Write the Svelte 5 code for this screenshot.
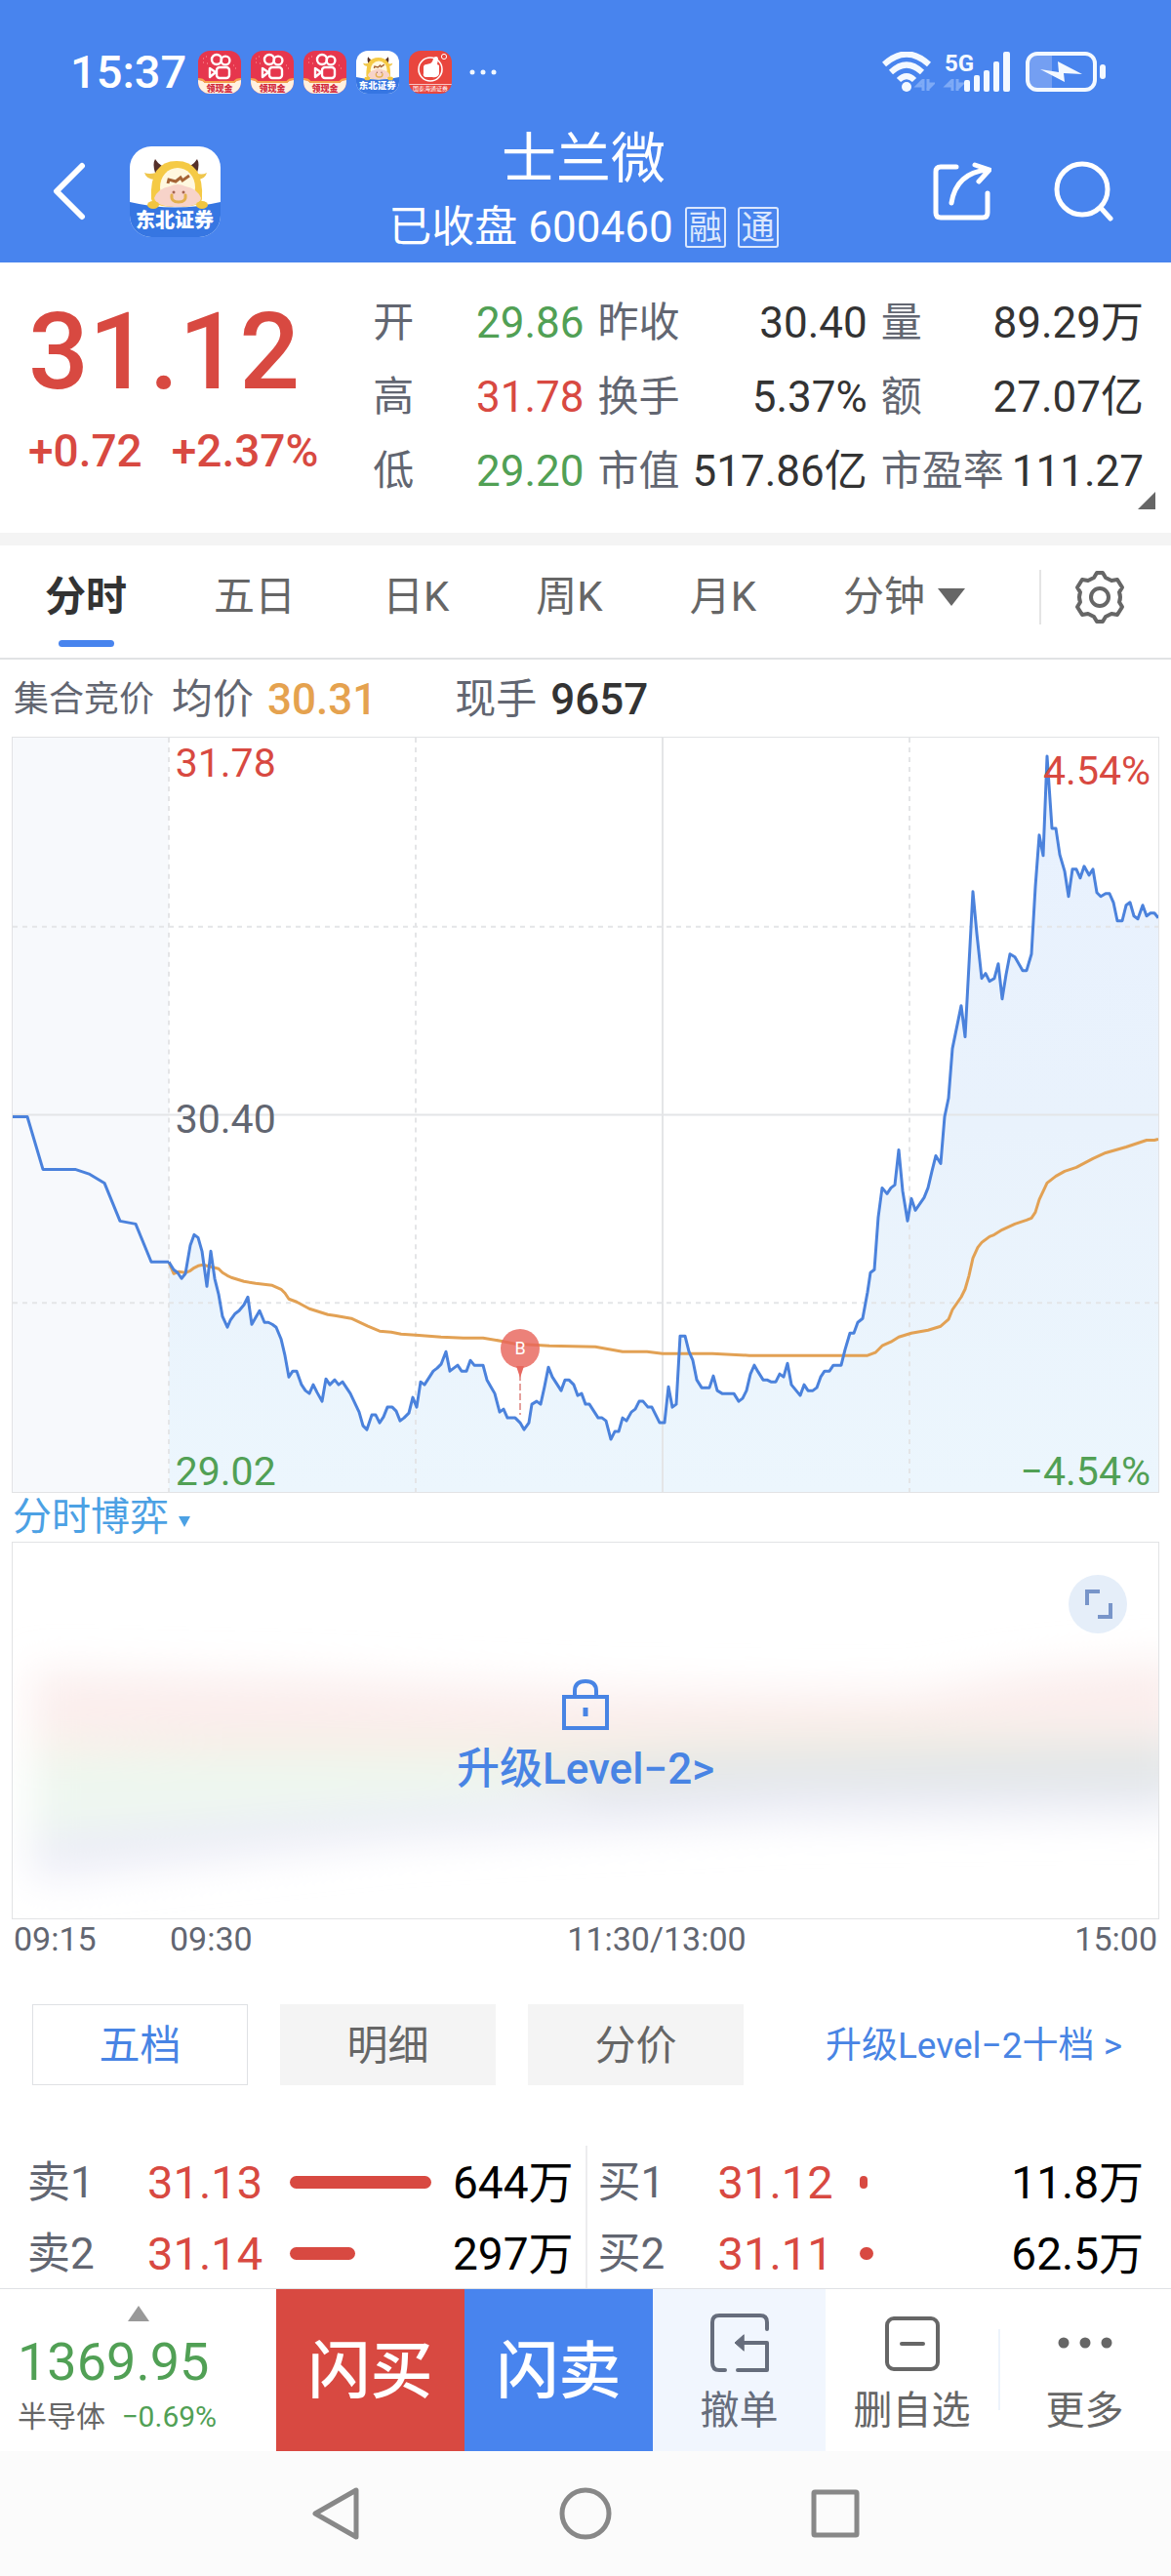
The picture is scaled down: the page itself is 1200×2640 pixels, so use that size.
<script lang="ts">
	type Level = { label: string; price: string; volume: number };

	const quoteColumns = [
		[
			{ label: '开', value: '29.86', tone: 'down' },
			{ label: '高', value: '31.78', tone: 'up' },
			{ label: '低', value: '29.20', tone: 'down' }
		],
		[
			{ label: '昨收', value: '30.40', tone: '' },
			{ label: '换手', value: '5.37%', tone: '' },
			{ label: '市值', value: '517.86亿', tone: '' }
		],
		[
			{ label: '量', value: '89.29万', tone: '' },
			{ label: '额', value: '27.07亿', tone: '' },
			{ label: '市盈率', value: '111.27', tone: '' }
		]
	];

	const periods = ['分时', '五日', '日K', '周K', '月K'];
	let period = $state('分时');

	const depthTabs = ['五档', '明细', '分价'];
	let depthTab = $state('五档');

	const sells: Level[] = [
		{ label: '卖1', price: '31.13', volume: 644 },
		{ label: '卖2', price: '31.14', volume: 297 }
	];
	const buys: Level[] = [
		{ label: '买1', price: '31.12', volume: 11.8 },
		{ label: '买2', price: '31.11', volume: 62.5 }
	];
	const maxVolume = Math.max(...[...sells, ...buys].map((l) => l.volume));

	// call auction, 09:15 - 09:30
	const auction = '0,389 15,389 31,443 64,443 79,448 94,457 110,496 126,499 142,538 160,538';
	const price =
		'160,538 165,546 169,549 173,555 177,550 182,521 186,510 190,513 194,527 199,563 203,527 207,555 211,571 215,594 220,605 223,598 228,591 232,588 237,582 241,574 245,602 249,595 253,588 258,600 262,600 266,602 270,605 275,617 279,634 283,656 287,650 291,650 296,664 300,670 304,673 308,664 312,672 317,681 321,658 325,664 330,659 334,664 338,661 346,673 355,692 359,706 363,710 368,695 372,695 376,703 380,697 384,687 389,687 393,691 397,701 401,698 406,693 410,677 414,687 418,661 422,664 431,650 435,647 439,643 444,630 448,650 456,644 460,650 465,650 469,639 473,644 482,644 486,659 490,666 494,673 499,692 503,689 507,698 515,698 520,703 524,710 529,703 532,684 537,681 541,684 545,666 549,646 553,656 562,670 566,659 570,659 575,664 579,675 583,673 587,684 591,684 600,698 604,698 608,701 613,720 617,712 621,712 625,698 629,701 634,692 638,689 642,681 646,681 651,687 655,687 663,703 668,703 672,666 676,687 680,684 684,614 689,614 693,630 697,639 701,659 706,667 714,667 718,655 722,670 727,673 739,673 744,681 748,678 752,670 756,653 760,644 764,651 769,659 773,659 777,661 782,661 786,653 790,656 794,642 798,664 807,675 811,664 815,670 820,670 824,667 828,656 832,650 837,650 841,644 849,644 853,628 858,611 862,611 866,600 871,596 876,569 879,549 883,546 887,492 891,462 896,468 900,462 904,459 908,423 912,465 917,496 921,473 925,485 934,472 938,462 942,445 946,429 951,437 955,389 959,370 963,319 972,275 976,307 984,158 988,201 993,247 997,242 1001,250 1006,247 1010,232 1014,268 1018,243 1022,222 1027,225 1035,239 1039,239 1044,222 1048,153 1052,100 1056,121 1060,19 1065,93 1069,93 1073,120 1078,137 1082,163 1086,135 1090,135 1094,144 1098,132 1103,141 1107,135 1111,159 1115,163 1120,160 1124,160 1128,169 1132,188 1137,188 1141,172 1145,169 1149,183 1153,186 1158,172 1162,183 1166,180 1170,180 1174,185';
	const average =
		'160,538 165,550 170,548 177,549 182,547 186,544 190,542 195,541 203,543 211,545 215,549 220,552 224,554 237,558 249,560 266,562 275,566 279,570 283,576 291,579 304,586 323,592 330,593 347,596 364,604 376,609 388,610 398,612 413,613 439,615 462,616 482,616 500,619 515,622 550,624 597,625 625,630 650,630 666,632 717,632 755,634 876,634 884,631 891,624 900,620 908,615 921,611 938,608 951,604 959,597 963,587 972,574 976,566 980,552 984,534 989,523 993,518 1001,512 1006,510 1014,505 1027,499 1039,495 1044,493 1048,487 1052,474 1060,457 1069,450 1078,445 1090,441 1107,432 1120,426 1141,420 1162,413 1170,413 1174,412';
</script>

{#snippet bull()}
	<path d="M0 57Q46 68 93 57V93H0z" fill="#3676e2" />
	<path d="M26 27Q23 18 26 13Q29 18 33 20L35 24zM69 27Q72 18 69 13Q66 18 62 20L60 24z" fill="#55302a" />
	<path d="M27 27Q20 29 15 27Q17 34 26 34zM68 27Q73 30 79 27Q77 34 69 34z" fill="#efc64c" />
	<path d="M22 54Q20 15 48 15Q76 15 74 54Q73 62 48 62Q24 62 22 54z" fill="#f5ca45" />
	<ellipse cx="49" cy="42" rx="18" ry="20" fill="#fff8df" />
	<path d="M39 38L40 34L47 36L52 32L54 35L61 30" fill="none" stroke="#a56436" stroke-width="3" />
	<path d="M25 53Q29 43 41 41Q49 37 57 41Q69 43 73 53Q72 62 49 62Q27 62 25 53z" fill="#f7d3c9" />
	<path d="M43 50Q42 57 50 57Q58 57 57 50" fill="none" stroke="#e3b04c" stroke-width="3" stroke-linecap="round" />
	<circle cx="45" cy="47" r="1.5" fill="#a66450" />
	<circle cx="55" cy="47" r="1.5" fill="#a66450" />
	<ellipse cx="24" cy="60" rx="6" ry="4" fill="#f1c540" />
	<ellipse cx="74" cy="60" rx="6" ry="4" fill="#f1c540" />
	<text x="46" y="83" text-anchor="middle" font-size="20" font-weight="900" fill="#fff">东北证券</text>
{/snippet}

{#snippet levels(rows: Level[], name: string)}
	<table aria-label={name}>
		<tbody>
			{#each rows as row}
				<tr>
					<th scope="row">{row.label}</th>
					<td class="price">{row.price}</td>
					<td><div class="bar" style="width: {(row.volume / maxVolume) * 100}%"></div></td>
					<td class="volume">{row.volume}万</td>
				</tr>
			{/each}
		</tbody>
	</table>
{/snippet}

<div class="app">
	<header>
		<div class="status">
			<span class="clock">15:37</span>
			<div class="notices">
				{#each [1, 2, 3] as n (n)}
					<svg class="notice" viewBox="0 0 44 44" aria-hidden="true">
						<rect width="44" height="44" fill="#e6364d" />
						<path d="M0 30Q5 30 7 33H37Q39 30 44 30V44H0z" fill="#fff1df" />
						<path d="M0 29Q5 29 7 32H37Q39 29 44 29" fill="none" stroke="#f6a04c" stroke-width="2" />
						<g fill="none" stroke="#fff" stroke-width="2.4">
							<circle cx="19" cy="9" r="5" />
							<circle cx="28" cy="10" r="4.4" />
							<rect x="19" y="17" width="13" height="11" rx="3" />
							<path d="M18 22L12 18V27z" stroke-linejoin="round" />
						</g>
						<path d="M5 8h1M8 6h1M5 12h1M9 13h1M36 15h1M38 18h1" stroke="#ffa0a0" />
						<text x="22" y="42" text-anchor="middle" font-size="9" font-weight="900" fill="#d22b3e">领现金</text>
					</svg>
				{/each}
				<svg class="notice" viewBox="0 0 93 93" aria-hidden="true">
					<rect width="93" height="93" fill="#fff" />
					{@render bull()}
				</svg>
				<svg class="notice" viewBox="0 0 44 44" aria-hidden="true">
					<rect width="44" height="44" fill="#e9463e" />
					<circle cx="22" cy="19" r="12" fill="none" stroke="#fff" stroke-width="1.6" />
					<path d="M15 17Q15 14 18 14L22 13Q25 11 25 7Q30 4 30 9L29 14L31 15V24Q29 28 24 27H17Q14 26 15 23z" fill="#fff" />
					<circle cx="36" cy="6" r="2.6" fill="none" stroke="#fff" />
					<path d="M0 34.5H44" stroke="#fff" stroke-width=".7" />
					<text x="22" y="41" text-anchor="middle" font-size="6" fill="#fff">国泰海通证券</text>
				</svg>
			</div>
			<svg class="dots" width="28" height="6" viewBox="0 0 28 6" fill="#f2f8ff" aria-hidden="true">
				<circle cx="3" cy="3" r="2.5" /><circle cx="14" cy="3" r="2.5" /><circle cx="25" cy="3" r="2.5" />
			</svg>
			<div class="signals">
				<svg width="54" height="42" viewBox="0 0 54 42" aria-hidden="true">
					<g fill="none" stroke="#f4f9ff" stroke-width="6">
						<path d="M2 13Q25 -8 48 13" /><path d="M9 21Q25 6 41 21" /><path d="M17 29Q25 21 33 29" />
					</g>
					<circle cx="25" cy="36" r="5" fill="#f4f9ff" />
					<path d="M42 28V40M42 29L36 35H42M47 28V40M46 39L52 33H46" stroke="#7eaaf6" stroke-width="3" fill="none" />
				</svg>
				<svg class="cell" width="67" height="42" viewBox="0 0 67 42" aria-hidden="true">
					<text x="0" y="20" font-size="24" font-weight="700" fill="#f4f9ff">5G</text>
					<path d="M8 28V40M8 29L2 35H8M13 28V40M12 39L18 33H12" stroke="#7eaaf6" stroke-width="3" fill="none" />
					<g fill="#f4f9ff">
						<rect x="20" y="29" width="6" height="12" rx="2" />
						<rect x="30" y="24" width="6" height="17" rx="2" />
						<rect x="40" y="19" width="6" height="22" rx="2" />
						<rect x="50" y="10" width="6" height="31" rx="2" />
						<rect x="60" y="0" width="7" height="41" rx="2" />
					</g>
				</svg>
				<svg class="battery" width="82" height="42" viewBox="0 0 82 42" aria-hidden="true">
					<rect x="2" y="2" width="25" height="37" rx="8" fill="#749ff2" />
					<rect x="18" y="2" width="9" height="37" fill="#749ff2" />
					<rect x="2" y="2" width="69" height="37" rx="10" fill="none" stroke="#f4f9ff" stroke-width="4" />
					<rect x="76" y="13" width="6" height="15" rx="3" fill="#f4f9ff" />
					<path d="M15 18L34 21L33 10L58 23L39 22L40 31z" fill="#f4f9ff" />
				</svg>
			</div>
		</div>
		<div class="nav">
			<div class="left">
				<button aria-label="返回">
					<svg width="34" height="60" viewBox="0 0 34 60"><path d="M30 4L4 30L30 56" fill="none" stroke="#fff" stroke-width="6" stroke-linecap="round" stroke-linejoin="round" /></svg>
				</button>
				<svg class="logo" viewBox="0 0 93 93" role="img" aria-label="东北证券">
					<rect width="93" height="93" fill="#fff" />
					{@render bull()}
				</svg>
			</div>
			<div class="title">
				<h1>士兰微</h1>
				<p>已收盘 600460 <span class="badge">融</span><span class="badge">通</span></p>
			</div>
			<div class="right">
				<button aria-label="分享">
					<svg width="60" height="60" viewBox="0 0 60 60" fill="none" stroke="#fff" stroke-width="5" stroke-linecap="round" stroke-linejoin="round">
						<path d="M24 5H8Q3 5 3 10V52Q3 57 8 57H51Q56 57 56 52V32" />
						<path d="M19 42Q24 11 56 8M43 3L58 8L47 20" />
					</svg>
				</button>
				<button aria-label="搜索">
					<svg width="62" height="62" viewBox="0 0 62 62" fill="none" stroke="#fff" stroke-width="5" stroke-linecap="round">
						<circle cx="29" cy="29" r="26" /><path d="M48 48L58 59" />
					</svg>
				</button>
			</div>
		</div>
	</header>

	<section class="quote">
		<div class="last up">
			<strong>31.12</strong>
			<div class="change"><span>+0.72</span><span>+2.37%</span></div>
		</div>
		<div class="stats">
			{#each quoteColumns as column}
				<dl>
					{#each column as item}
						<div><dt>{item.label}</dt><dd class={item.tone}>{item.value}</dd></div>
					{/each}
				</dl>
			{/each}
		</div>
		<i class="corner"></i>
	</section>

	<nav class="periods">
		<div class="period-list">
			{#each periods as p}
				<button class:active={period === p} onclick={() => (period = p)}>{p}</button>
			{/each}
			<button class="minutes">分钟<svg width="28" height="18" viewBox="0 0 28 18"><path d="M0 0H28L14 18z" fill="#666" /></svg></button>
		</div>
		<button class="settings" aria-label="设置">
			<svg width="56" height="56" viewBox="0 0 56 56" fill="none" stroke="#666" stroke-width="4" stroke-linejoin="round">
				<path d="M22 8L25 3H31L34 8L40 11L46 10L51 18L48 23Q50 28 48 33L51 38L46 46L40 45L34 48L31 53H25L22 48L16 45L10 46L5 38L8 33Q6 28 8 23L5 18L10 10L16 11z" />
				<circle cx="28" cy="28" r="9" />
			</svg>
		</button>
	</nav>

	<div class="summary">
		<span class="small">集合竞价</span>
		<span>均价</span><b class="avg">30.31</b>
		<span class="hand">现手</span><b>9657</b>
	</div>

	<div class="chart">
		<svg class="plot" viewBox="0 0 1174 774" preserveAspectRatio="none" role="img" aria-label="分时走势">
			<defs>
				<linearGradient id="area" x1="0" y1="0" x2="0" y2="1">
					<stop offset="0" stop-color="#e8f1fe" />
					<stop offset=".5" stop-color="#e9f2fc" />
					<stop offset="1" stop-color="#ecf6fd" />
				</linearGradient>
			</defs>
			<rect width="160" height="774" fill="#f7f9fc" />
			<polygon points="160,774 {price} 1174,774" fill="url(#area)" />
			<g fill="none" stroke="#e4e5e7" stroke-width="2">
				<path d="M0 387H1174M666 0V774" />
				<path d="M0 194H1174M0 580H1174M160 0V774M413 0V774M919 0V774" stroke-dasharray="5 5" />
			</g>
			<g fill="none" stroke-width="3" stroke-linejoin="round">
				<polyline points={average} stroke="#e2a154" />
				<polyline points={auction} stroke="#4b82dc" />
				<polyline points={price} stroke="#4b82dc" />
			</g>
		</svg>
		<svg class="pin" width="40" height="90" viewBox="0 0 40 90" aria-hidden="true">
			<path d="M20 46V88" stroke="#e5a09c" stroke-width="2" stroke-dasharray="7 3" />
			<path d="M16 38H24L20 50z" fill="#e76860" />
			<circle cx="20" cy="20" r="20" fill="#e8655c" fill-opacity=".82" />
			<text x="20" y="26" text-anchor="middle" font-size="18" fill="#fff">B</text>
		</svg>
		<span class="mark high up">31.78</span>
		<span class="mark middle">30.40</span>
		<span class="mark low down">29.02</span>
		<span class="mark high-rate up">4.54%</span>
		<span class="mark low-rate down">−4.54%</span>
	</div>

	<button class="indicator">分时博弈<svg width="12" height="11" viewBox="0 0 12 11"><path d="M0 0H12L6 11z" fill="#4ca1e4" /></svg></button>

	<div class="level2">
		<svg class="haze" viewBox="0 0 1174 386" preserveAspectRatio="none" aria-hidden="true">
			<defs>
				<filter id="soft" x="-10%" y="-50%" width="120%" height="200%"><feGaussianBlur stdDeviation="21" /></filter>
			</defs>
			<g filter="url(#soft)">
				<path d="M20 132L300 138L600 152L920 155L1050 132L1200 120V200L900 205L500 205L20 200z" fill="#fbeeed" />
				<path d="M20 205L300 200L600 200L900 190L1200 200V225L600 235L20 225z" fill="#f4efe2" />
				<path d="M20 220L300 220L500 225L700 240L400 275L20 300z" fill="#eef7f0" />
				<path d="M480 235L700 215L1200 205V270L700 280z" fill="#e2e6e7" />
				<path d="M20 300L400 272L800 250L1200 255V280L800 285L400 305L20 345z" fill="#ebecf6" />
			</g>
		</svg>
		<a class="upgrade" href="#level2">
			<svg width="48" height="54" viewBox="0 0 48 54" fill="none" stroke="#4884e4" stroke-width="4">
				<rect x="2" y="19" width="44" height="32" /><path d="M13 19V13Q13 3 24 3Q35 3 35 13V19" /><path d="M24 30V39" stroke-width="5" />
			</svg>
			<span>升级Level−2&gt;</span>
		</a>
		<button class="expand" aria-label="全屏">
			<svg width="60" height="60" viewBox="0 0 60 60" fill="none" stroke="#7895c9" stroke-width="4"><path d="M19 31V17H32M30 43H43V29" /></svg>
		</button>
	</div>

	<div class="times"><span>09:15</span><span>09:30</span><span>11:30/13:00</span><span>15:00</span></div>

	<div class="depth-tabs">
		{#each depthTabs as tab}
			<button class:active={depthTab === tab} onclick={() => (depthTab = tab)}>{tab}</button>
		{/each}
		<a href="#level2">升级Level−2十档 &gt;</a>
	</div>

	<div class="depth">
		{@render levels(sells, '卖盘')}
		{@render levels(buys, '买盘')}
	</div>

	<footer>
		<button class="sector">
			<svg width="22" height="16" viewBox="0 0 22 16"><path d="M11 0L22 16H0z" fill="#999" /></svg>
			<span class="index down">1369.95</span>
			<span class="sector-name">半导体 <span class="down">−0.69%</span></span>
		</button>
		<button class="trade buy">闪买</button>
		<button class="trade sell">闪卖</button>
		<button class="action cancel">
			<svg width="60" height="60" viewBox="0 0 60 60" fill="none" stroke="#666d7c" stroke-width="4" stroke-linecap="round" stroke-linejoin="round">
				<path d="M58 16V9Q58 2 51 2H9Q2 2 2 9V50Q2 58 9 58H15M28 58H58V30H29" />
				<path d="M34 22L25 30L34 38z" fill="#666d7c" stroke-width="1" />
			</svg>
			撤单
		</button>
		<button class="action remove">
			<svg width="60" height="60" viewBox="0 0 60 60" fill="none" stroke="#666" stroke-width="4" stroke-linecap="round">
				<rect x="4" y="5" width="52" height="52" rx="7" /><path d="M19 31H41" />
			</svg>
			删自选
		</button>
		<button class="action more">
			<svg width="60" height="60" viewBox="0 0 60 60" fill="#666">
				<circle cx="8" cy="30" r="5.5" /><circle cx="30" cy="30" r="5.5" /><circle cx="52" cy="30" r="5.5" />
			</svg>
			更多
		</button>
	</footer>

	<div class="system" role="toolbar" aria-label="系统导航">
		<button aria-label="后退"><svg width="56" height="56" viewBox="0 0 56 56"><path d="M49 4V52L7 28z" /></svg></button>
		<button aria-label="主屏幕"><svg width="56" height="56" viewBox="0 0 56 56"><circle cx="28" cy="28" r="24" /></svg></button>
		<button aria-label="最近任务"><svg width="56" height="56" viewBox="0 0 56 56"><rect x="6" y="6" width="44" height="44" rx="1" /></svg></button>
	</div>
</div>

<style>
	:global(body) {
		margin: 0;
		background: #fff;
	}
	.app {
		font-family: Roboto, "Noto Sans CJK SC", sans-serif;
		font-size: 42px;
		line-height: 48px;
		color: #333;
		overflow: hidden;
	}
	button {
		padding: 0;
		border: 0;
		background: none;
		font: inherit;
		color: inherit;
		cursor: pointer;
	}
	a {
		color: #4884e4;
		text-decoration: none;
	}
	svg {
		display: block;
		flex: none;
	}
	h1,
	p,
	dl,
	dd {
		margin: 0;
	}

	header {
		padding-top: 52px;
		background: #4884ee;
		color: #fff;
	}
	.status {
		display: flex;
		align-items: center;
		height: 44px;
		padding: 0 67px 0 72px;
	}
	.clock {
		font-size: 47px;
		font-weight: 500;
	}
	.notices {
		display: flex;
		gap: 10px;
		margin-left: 12px;
	}
	.notice {
		width: 44px;
		height: 44px;
		border-radius: 12px;
	}
	.dots {
		margin-left: 18px;
	}
	.signals {
		display: flex;
		gap: 10px;
		margin-left: auto;
	}
	.cell {
		overflow: visible;
	}
	.battery {
		margin-left: 6px;
	}
	.nav {
		display: grid;
		grid-template-columns: 1fr auto 1fr;
		align-items: center;
		padding: 32px 58px 5px 54px;
	}
	.left,
	.right {
		display: flex;
		align-items: center;
		gap: 45px;
	}
	.right {
		justify-content: flex-end;
		gap: 64px;
	}
	.logo {
		width: 93px;
		height: 93px;
		border-radius: 22px;
	}
	.title {
		padding: 3px 0 7px;
		text-align: center;
	}
	.title h1 {
		font-size: 56px;
		line-height: 64px;
		font-weight: 400;
	}
	.title p {
		display: flex;
		align-items: center;
		gap: 12px;
		margin-top: 14px;
		font-size: 44px;
	}
	.badge {
		width: 38px;
		border: 2px solid #dbe7fd;
		border-radius: 3px;
		font-size: 34px;
		line-height: 38px;
		color: #dbe7fd;
	}

	.quote {
		position: relative;
		display: flex;
		padding: 24px 28px 25px 29px;
		border-bottom: 13px solid #f4f4f4;
	}
	.last {
		flex: 353;
		padding-top: 13px;
	}
	.last strong {
		display: block;
		font-size: 109px;
		line-height: 110px;
		font-weight: 500;
	}
	.change {
		display: flex;
		gap: 30px;
		margin-top: 22px;
		font-size: 46px;
		font-weight: 500;
	}
	.stats {
		flex: 789;
		display: grid;
		grid-template-columns: 216fr 276fr 269fr;
		gap: 14px;
	}
	.stats dl div {
		display: flex;
		justify-content: space-between;
		align-items: center;
		height: 76px;
	}
	.stats dt {
		color: #626671;
	}
	.stats dd {
		font-size: 44px;
		white-space: nowrap;
	}
	.corner {
		position: absolute;
		right: 16px;
		bottom: 24px;
		border: 9px solid #666;
		border-top-color: transparent;
		border-left-color: transparent;
	}

	.periods {
		display: flex;
		align-items: flex-start;
		height: 115px;
		border-bottom: 2px solid #e1e2e4;
		color: #666;
	}
	.period-list {
		flex: 1;
		display: flex;
		justify-content: space-between;
		padding: 29px 76px 0 46px;
	}
	.period-list button {
		display: flex;
		flex-direction: column;
		align-items: center;
	}
	.period-list .active {
		color: #333;
		font-weight: 700;
	}
	.period-list .active::after {
		content: "";
		width: 57px;
		height: 7px;
		margin-top: 20px;
		border-radius: 4px;
		background: #4884ee;
	}
	.period-list .minutes {
		flex-direction: row;
		align-items: flex-start;
		gap: 13px;
	}
	.minutes svg {
		margin-top: 15px;
	}
	.settings {
		margin-top: 25px;
		padding: 0 45px 0 32px;
		border-left: 2px solid #e4e4e4;
	}

	.summary {
		display: flex;
		align-items: center;
		padding: 17px 14px 14px;
		color: #626671;
	}
	.summary .small {
		margin-right: 18px;
		font-size: 36px;
	}
	.summary b {
		margin-left: 14px;
		font-size: 44px;
		font-weight: 500;
		color: #333;
	}
	.summary .avg {
		color: #e5a24f;
	}
	.hand {
		margin-left: 80px;
	}

	.chart,
	.level2 {
		position: relative;
		margin: 0 12px;
		border: 1px solid #e2e3e5;
	}
	.plot {
		width: 100%;
		height: 773px;
	}
	.pin {
		position: absolute;
		top: 606px;
		left: 44.3%;
		margin-left: -20px;
	}
	.mark {
		position: absolute;
		left: 14.2%;
		font-size: 41px;
		color: #626671;
	}
	.high {
		top: 2px;
	}
	.middle {
		top: 367px;
	}
	.low,
	.low-rate {
		bottom: -3px;
	}
	.high-rate {
		top: 10px;
	}
	.high-rate,
	.low-rate {
		left: auto;
		right: 8px;
	}
	.up {
		color: #d84941;
	}
	.down {
		color: #51a055;
	}

	.indicator {
		display: flex;
		align-items: center;
		gap: 10px;
		padding: 1px 13px;
		font-size: 40px;
		color: #4ca1e4;
	}
	.indicator svg {
		margin-top: 8px;
	}

	.level2 {
		height: 385px;
	}
	.haze {
		width: 100%;
		height: 100%;
	}
	.upgrade {
		position: absolute;
		inset: 139px 0 auto;
		display: flex;
		flex-direction: column;
		align-items: center;
		gap: 15px;
		font-size: 44px;
		font-weight: 500;
	}
	.expand {
		position: absolute;
		top: 33px;
		right: 32px;
		border-radius: 50%;
		background: #e5eef9;
	}
	.times {
		display: grid;
		grid-template-columns: 160fr 332fr 334fr 346fr;
		padding: 0 14px;
		font-size: 34px;
		line-height: 40px;
		color: #626671;
	}
	.times span:nth-child(3) {
		justify-self: center;
	}
	.times span:last-child {
		justify-self: end;
	}

	.depth-tabs {
		display: flex;
		align-items: center;
		gap: 33px;
		padding: 47px 50px 62px 33px;
		color: #666;
	}
	.depth-tabs button {
		flex: 1;
		height: 83px;
		padding-top: 2px;
		border: 1px solid #f4f4f4;
		background: #f4f4f4;
	}
	.depth-tabs .active {
		border-color: #dfe1e4;
		background: #fff;
		color: #4884e4;
	}
	.depth-tabs a {
		margin-left: 51px;
		padding-top: 2px;
		font-size: 37px;
	}

	.depth {
		display: flex;
	}
	.depth :global(table) {
		flex: 1;
		table-layout: fixed;
		border-spacing: 0;
		width: 50%;
		padding: 0 12px 0 28px;
	}
	.depth :global(table + table) {
		padding: 0 28px 0 11px;
		border-left: 2px solid #ececee;
	}
	th,
	td {
		height: 71px;
		padding: 2px 0 0;
		font-size: 46px;
		text-align: left;
		color: #000;
	}
	th {
		width: 22%;
		font-size: 44px;
		font-weight: 400;
		color: #626671;
	}
	td {
		width: 26%;
	}
	td.price {
		font-size: 47px;
		color: #d84941;
	}
	td.volume {
		text-align: right;
		white-space: nowrap;
	}
	.bar {
		min-width: 8px;
		height: 13px;
		border-radius: 7px;
		background: #d84941;
	}

	footer {
		display: flex;
		height: 166px;
		border-top: 1px solid #dfe1e4;
		font-size: 40px;
		color: #666;
	}
	.sector {
		flex: 265;
		display: flex;
		flex-direction: column;
		padding: 17px 0 0 18px;
		text-align: left;
	}
	.sector svg {
		align-self: center;
		margin-right: 18px;
	}
	.index {
		margin-top: 14px;
		font-size: 54px;
		line-height: 56px;
	}
	.sector-name {
		margin-top: 8px;
		font-size: 30px;
		line-height: 40px;
	}
	.sector-name .down {
		margin-left: 9px;
	}
	.trade {
		flex: 193;
		padding-top: 3px;
		font-size: 64px;
		font-weight: 500;
		color: #fff;
	}
	.buy {
		background: #d84941;
	}
	.sell {
		background: #4884ee;
	}
	.action {
		flex: 177;
		display: flex;
		flex-direction: column;
		align-items: center;
		gap: 16px;
		padding-top: 25px;
	}
	.cancel {
		background: #f1f6fe;
		color: #666d7c;
	}
	.more {
		position: relative;
	}
	.more::before {
		content: "";
		position: absolute;
		top: 41px;
		bottom: 42px;
		left: 0;
		width: 2px;
		background: #edf3fb;
	}

	.system {
		display: flex;
		justify-content: center;
		gap: 200px;
		padding: 36px 0;
		background: #fbfbfb;
	}
	.system svg {
		fill: none;
		stroke: #888;
		stroke-width: 5px;
		stroke-linejoin: round;
	}
</style>
